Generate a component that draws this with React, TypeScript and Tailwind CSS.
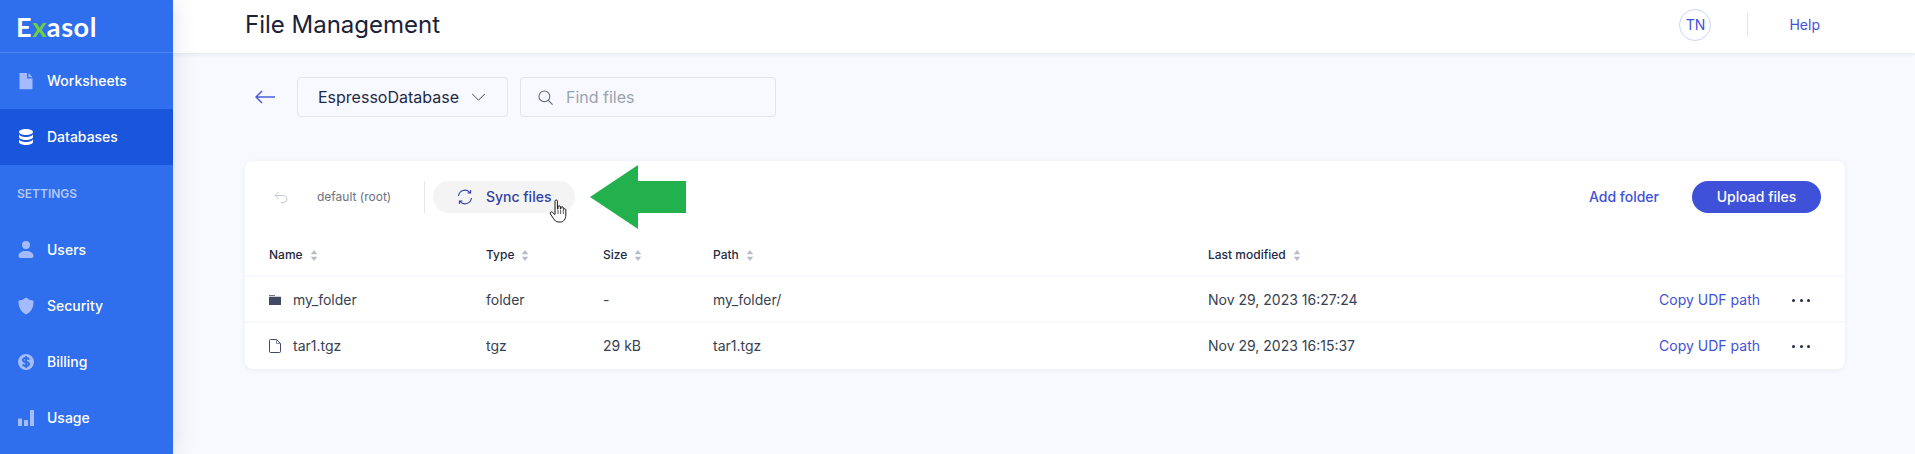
import React from "react";

const P = ({ d, className = "" }: { d: string; className?: string }) => (
  <svg viewBox="0 0 20 20" fill="currentColor" className={className}><path d={d} fillRule="evenodd" clipRule="evenodd" /></svg>
);

const icons: Record<string, string> = {
  Worksheets: "M3.5 2h7.5v5.5h5.5v10a.8.8 0 01-.8.8H4.3a.8.8 0 01-.8-.8V2zM12.5 2l4 4.2h-4V2z",
  Databases: "M3 12v3c0 1.657 3.134 3 7 3s7-1.343 7-3v-3c0 1.657-3.134 3-7 3s-7-1.343-7-3zM3 7v3c0 1.657 3.134 3 7 3s7-1.343 7-3V7c0 1.657-3.134 3-7 3S3 8.657 3 7zM17 5c0 1.657-3.134 3-7 3S3 6.657 3 5s3.134-3 7-3 7 1.343 7 3z",
  Users: "M10 9a4 4 0 100-8 4 4 0 000 8zM2.5 16c0-3 3-5 7.5-5s7.500 2 7.500 5c0 1-1 2-2 2h-11c-1 0-2-1-2-2z",
  Security: "M2.666 4.6A11.954 11.954 0 0010 1.6 11.954 11.954 0 0017.334 4.6c.11.65.166 1.32.166 2.001 0 5.225-2.84 10-7.5 12C5.84 16.600 2.500 11.825 2.500 6.600c0-.682.057-1.350.166-2z",
  Billing: "M8.433 7.418c.155-.103.346-.196.567-.267v1.698a2.305 2.305 0 01-.567-.267C8.07 8.34 8 8.114 8 8c0-.114.07-.34.433-.582zM11 12.849v-1.698c.22.071.412.164.567.267.364.243.433.468.433.582 0 .114-.07.34-.433.582a2.305 2.305 0 01-.567.267zM10 18a8 8 0 100-16 8 8 0 000 16zm1-13a1 1 0 10-2 0v.092a4.535 4.535 0 00-1.676.662C6.602 6.234 6 7.009 6 8c0 .99.602 1.765 1.324 2.246.48.32 1.054.545 1.676.662v1.941c-.391-.127-.68-.317-.843-.504a1 1 0 10-1.51 1.31c.562.649 1.413 1.076 2.353 1.253V15a1 1 0 102 0v-.092a4.535 4.535 0 001.676-.662C13.398 13.766 14 12.991 14 12c0-.99-.602-1.765-1.324-2.246A4.535 4.535 0 0011 9.092V7.151c.391.127.68.317.843.504a1 1 0 101.511-1.31c-.563-.649-1.413-1.076-2.354-1.253V5z",
  Usage: "M2 11a.6.6 0 01.6-.6h2.800a.6.6 0 01.6.6v7H2v-7zM8 12.500a.6.6 0 01.6-.6h2.800a.6.6 0 01.6.6V18H8v-5.500zM14 2.600a.6.6 0 01.6-.6h2.800a.6.6 0 01.6.6V18h-4V2.600z",
};

const NavItem = ({ label, active }: { label: string; active?: boolean }) => (
  <div className={`flex h-14 items-center pl-4 text-sm font-medium text-white ${active ? "bg-[#1a56db]" : ""}`}>
    <P d={icons[label]} className={`h-5 w-5 shrink-0 ${active ? "text-white" : "text-[#a4bcfd]"}`} />
    <span className="ml-[11px]">{label}</span>
  </div>
);

const Sort = () => (
  <svg viewBox="0 0 8 12" className="ml-[7px] h-[11px] w-[8px] text-[#b6bbc6]" fill="currentColor">
    <path d="M4 0l3.500 4.600h-7zM4 12L.5 7.400h7z" />
  </svg>
);

const columns = "grid-cols-[217px_117px_110px_495px_1fr_auto]";

const Th = ({ children }: { children: string }) => (
  <div className="flex items-center text-xs font-medium text-[#1f2a44]">{children}<Sort /></div>
);

const Folder = () => (
  <svg viewBox="0 0 12 10" className="mr-3 h-[10px] w-[12px] text-[#3f4a64]" fill="currentColor">
    <path d="M0 0h6v.8H0zM0 1.800h12V10H0z" />
  </svg>
);

const FileIcon = () => (
  <svg viewBox="0 0 12 14" className="mr-3 h-[14px] w-[12px] text-[#3f4a64]" fill="none" stroke="currentColor" strokeWidth="1">
    <path d="M1.500.5h6l4 4v8a1 1 0 01-1 1h-9a1 1 0 01-1-1v-11a1 1 0 011-1z" />
    <path d="M7.500.5v4h4" strokeWidth="0.6" />
  </svg>
);

const Row = ({ icon, name, type, size, path, date }: { icon: React.ReactNode; name: string; type: string; size: string; path: string; date: string }) => (
  <div className={`grid h-[46px] ${columns} items-center border-t-2 border-[#f8f9fe] pl-6 pr-[35px] pt-[2px] text-sm text-[#374151]`}>
    <div className="flex items-center">{icon}{name}</div>
    <div>{type}</div>
    <div>{size}</div>
    <div>{path}</div>
    <div>{date}</div>
    <div className="flex items-center">
      <span className="text-sm text-[#3f51d9]">Copy UDF path</span>
      <span className="ml-[32px] flex w-[18px] justify-between">
        <i className="h-[3px] w-[3px] rounded-full bg-[#1f2a44]" />
        <i className="h-[3px] w-[3px] rounded-full bg-[#1f2a44]" />
        <i className="h-[3px] w-[3px] rounded-full bg-[#1f2a44]" />
      </span>
    </div>
  </div>
);

export default function App() {
  return (
    <div className="flex h-[454px] overflow-hidden bg-[#f8f9fe] font-['Inter',sans-serif]">
      <aside className="z-20 w-[173px] shrink-0 bg-[#2f6eec] shadow-[0_0_22px_rgba(30,40,90,0.14)]">
        <div className="flex h-[53px] items-center border-b border-[#4d84ef] pl-[16px] font-['Lato',sans-serif] text-[27px] font-bold leading-none tracking-[0.6px] text-white">
          E<span className="text-[#6fcf3c]">x</span>asol
        </div>
        <NavItem label="Worksheets" />
        <NavItem label="Databases" active />
        <div className="flex h-[57px] items-center pl-[17px] text-xs font-semibold text-[#b4c8fb]">SETTINGS</div>
        <NavItem label="Users" />
        <NavItem label="Security" />
        <NavItem label="Billing" />
        <NavItem label="Usage" />
      </aside>

      <div className="min-w-0 flex-1">
        <header className="relative z-10 flex h-[53px] items-center bg-white pb-[3px] pl-[72px] pr-[95px] shadow-[0_1px_4px_rgba(30,40,90,0.1)]">
          <h1 className="flex-1 text-2xl font-normal text-[#1a2238]">File Management</h1>
          <div className="flex h-8 w-8 items-center justify-center rounded-full border border-[#c9d6fb] text-sm text-[#3f51d9]">TN</div>
          <div className="ml-[36px] mr-[35px] h-6 w-px bg-[#e5e7eb]" />
          <a className="ml-[6px] text-sm text-[#3f51d9]">Help</a>
        </header>

        <main className="pl-[72px] pr-[70px]">
          <div className="flex items-center pt-6">
            <svg viewBox="0 0 20 14" className="ml-[10px] mr-[22px] h-[14px] w-[20px] text-[#4a5fd9]" fill="none" stroke="currentColor" strokeWidth="1.5">
              <path d="M20 7H1M7 1L1 7l6 6" />
            </svg>
            <div className="flex h-10 w-[211px] items-center rounded border border-[#e2e5ec] pl-[20px] text-base text-[#1f2a44]">
              EspressoDatabase
              <svg viewBox="0 0 16 10" className="ml-[12px] h-[9px] w-[15px] text-[#3f4a64]" fill="none" stroke="currentColor" strokeWidth="1.1"><path d="M1 1l7 7 7-7" /></svg>
            </div>
            <div className="ml-3 flex h-10 w-[256px] items-center rounded border border-[#e2e5ec] pl-[17px] text-base text-[#9ca3af]">
              <svg viewBox="0 0 16 16" className="mr-[13px] h-[15px] w-[15px] text-[#5b6475]" fill="none" stroke="currentColor" strokeWidth="1.1"><circle cx="6.800" cy="6.800" r="5.800" /><path d="M11 11l4.500 4.500" /></svg>
              Find files
            </div>
          </div>

          <section className="mt-[44px] rounded-lg bg-white pb-[2px] shadow-[0_1px_5px_rgba(30,40,90,0.06)]">
            <div className="flex items-center pl-[29px] pr-6 pt-5">
              <svg viewBox="0 0 14 12" className="h-[12px] w-[14px] text-[#c6cad3]" fill="none" stroke="currentColor" strokeWidth="1"><path d="M4.500 1L1 4.500 4.500 8M1 4.500h8.500a3.500 3.500 0 010 7H7" /></svg>
              <span className="ml-[29px] text-xs text-[#6b7280]">default (root)</span>
              <div className="ml-[33px] h-8 w-px bg-[#e5e7eb]" />
              <div className="relative ml-2 flex h-8 w-[142px] items-center justify-center rounded-full bg-[#f4f4f5] text-sm font-medium text-[#3140a5]">
                <svg viewBox="0 0 16 16" className="mr-[13px] h-4 w-4" fill="none" stroke="currentColor" strokeWidth="1.1">
                  <path d="M1.500 7A6.500 6.500 0 0113 3.600M14.500 9A6.500 6.500 0 013 12.400M13.600 1v3h-3M2.400 15v-3h3" />
                </svg>
                Sync files
                <svg viewBox="0 0 18 24" className="absolute left-[116px] top-[18px] h-6 w-[18px]" fill="#fff" stroke="#1a1a1a" strokeWidth="1" strokeLinejoin="round">
                  <path d="M6 2.200a1.200 1.200 0 012.400 0V10h.6V8a1.200 1.200 0 012.400 0v2h.5V9a1.200 1.200 0 012.400 0v1.500h.3V10.500a1.200 1.200 0 012.200 0V16c0 4-2.200 7-5.500 7H9.500c-2.500 0-3.600-1.300-5-3.500L1.400 15c-.9-1.500 1-2.800 2.200-1.600L6 15.500V2.200z" />
                  <path d="M9 11v4M11.600 11v4M14.300 11v4" strokeWidth="0.7" fill="none" />
                </svg>
              </div>
              <svg viewBox="0 0 96 64" className="-my-[16px] ml-[15px] h-16 w-24 text-[#22b14c]" fill="currentColor"><path d="M0 32L48 0v16h48v32H48v16z" /></svg>
              <div className="flex-1" />
              <span className="text-sm font-medium text-[#3f51d9]">Add folder</span>
              <button className="ml-[33px] h-8 w-[129px] rounded-full bg-[#3f51d9] text-sm font-medium text-white">Upload files</button>
            </div>
            <div className={`grid h-[62px] ${columns} items-center pl-6 pr-[35px] pt-[22px]`}>
              <Th>Name</Th><Th>Type</Th><Th>Size</Th><Th>Path</Th><Th>Last modified</Th><div />
            </div>
            <Row icon={<Folder />} name="my_folder" type="folder" size="-" path="my_folder/" date="Nov 29, 2023 16:27:24" />
            <Row icon={<FileIcon />} name="tar1.tgz" type="tgz" size="29 kB" path="tar1.tgz" date="Nov 29, 2023 16:15:37" />
          </section>
        </main>
      </div>
    </div>
  );
}
